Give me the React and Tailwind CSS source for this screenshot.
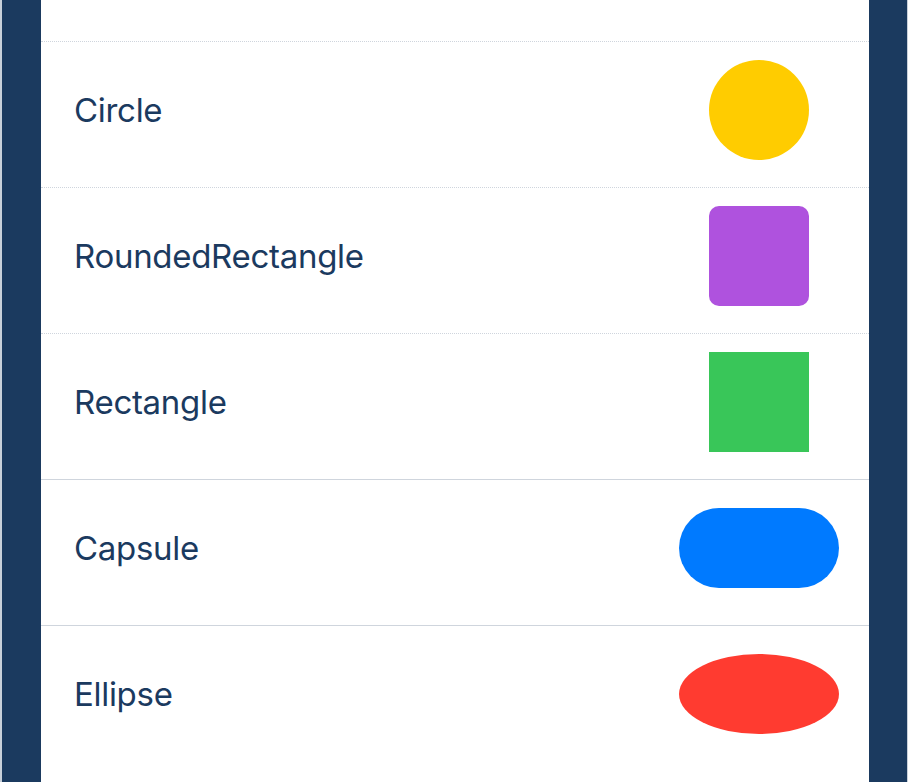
import React from "react";

const shapes = [
  { name: "Circle", shape: <div className="w-[100px] h-[100px] rounded-full bg-[#ffcc00]" />, line: "border-dotted" },
  { name: "RoundedRectangle", shape: <div className="w-[100px] h-[100px] rounded-[10px] bg-[#af52de]" />, line: "border-dotted" },
  { name: "Rectangle", shape: <div className="w-[100px] h-[100px] bg-[#39c659]" />, line: "border-dotted" },
  { name: "Capsule", shape: <div className="w-[160px] h-[80px] rounded-full bg-[#007aff]" />, line: "border-solid" },
  { name: "Ellipse", shape: <div className="w-[160px] h-[80px] rounded-[50%] bg-[#ff3b30]" />, line: "border-solid" },
];

function Row({ name, shape, line }) {
  return (
    <div className={`flex items-center justify-between h-[146px] pb-[10px] pl-[33px] pr-[30px] border-t border-[#cfd5dd] ${line}`}>
      <span className="text-[33px] leading-none text-[#1b3a5f] tracking-[-0.3px] mt-[2px]">{name}</span>
      <div className="w-[160px] flex justify-center">{shape}</div>
    </div>
  );
}

export default function App() {
  return (
    <div
      className="w-[908px] h-[782px] overflow-hidden bg-[#1b3a5f] pl-[39px] pr-[38px] border-l-2 border-r border-[#c8d0da]"
      style={{ fontFamily: "Inter, 'Noto Sans', sans-serif" }}
    >
      <div className="bg-white h-full flex flex-col">
        <div className="h-[41px] shrink-0" />
        {shapes.map((s) => (
          <Row key={s.name} {...s} />
        ))}
      </div>
    </div>
  );
}
